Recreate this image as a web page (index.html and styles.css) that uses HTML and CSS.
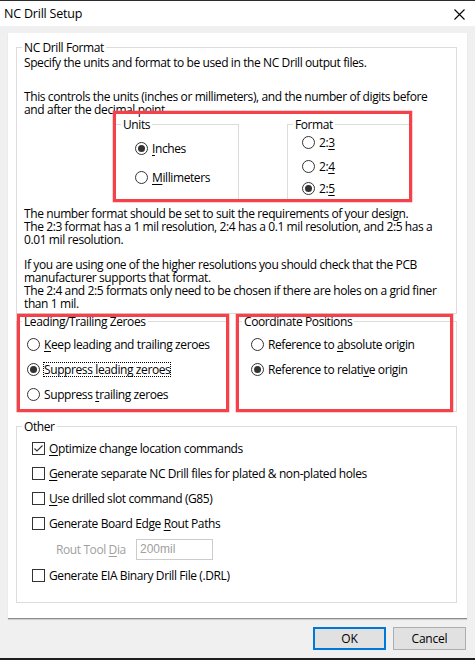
FILE: index.html
```html
<!DOCTYPE html>
<html lang="en">
<head>
<meta charset="utf-8">
<title>NC Drill Setup</title>
<link rel="stylesheet" href="styles.css">
</head>
<body>
<div class="window">
  <div class="titlebar">
    <span class="title">NC Drill Setup</span>
    <svg class="close" width="11" height="11" viewBox="0 0 11 11"><path d="M0.5 0.5 L10.5 10.5 M10.5 0.5 L0.5 10.5" stroke="#000" stroke-width="1.1" fill="none"/></svg>
  </div>
  <div class="client">
    <div class="panel">
      <fieldset class="group nc">
        <legend>NC Drill Format</legend>
        <p class="txt t1">Specify the units and format to be used in the NC Drill output files.</p>
        <p class="txt t2">This controls the units (inches or millimeters), and the number of digits before<br>and after the decimal point.</p>
        <div class="uf-row">
          <fieldset class="group units">
            <legend>Units</legend>
            <div class="opt u1"><span class="radio on"></span><span><u>I</u>nches</span></div>
            <div class="opt u2"><span class="radio"></span><span><u>M</u>illimeters</span></div>
          </fieldset>
          <fieldset class="group format">
            <legend>Format</legend>
            <div class="opt f1"><span class="radio"></span><span>2:<u>3</u></span></div>
            <div class="opt f2"><span class="radio"></span><span>2:<u>4</u></span></div>
            <div class="opt f3"><span class="radio on"></span><span>2:<u>5</u></span></div>
          </fieldset>
        </div>
        <p class="txt t3">The number format should be set to suit the requirements of your design.<br>The 2:3 format has a 1 mil resolution, 2:4 has a 0.1 mil resolution, and 2:5 has a<br>0.01 mil resolution.</p>
        <p class="txt t4">If you are using one of the higher resolutions you should check that the PCB<br>manufacturer supports that format.<br>The 2:4 and 2:5 formats only need to be chosen if there are holes on a grid finer<br>than 1 mil.</p>
      </fieldset>

      <div class="zero-row">
        <fieldset class="group lead">
          <legend>Leading/Trailing Zeroes</legend>
          <div class="opt r1"><span class="radio"></span><span><u>K</u>eep leading and trailing zeroes</span></div>
          <div class="opt r2"><span class="radio on"></span><span class="focus">Suppress <u>l</u>eading zeroes</span></div>
          <div class="opt r2"><span class="radio"></span><span>Suppress <u>t</u>railing zeroes</span></div>
        </fieldset>
        <fieldset class="group coord">
          <legend>Coordinate Positions</legend>
          <div class="opt r1"><span class="radio"></span><span>Reference to <u>a</u>bsolute origin</span></div>
          <div class="opt r2"><span class="radio on"></span><span>Reference to relati<u>v</u>e origin</span></div>
        </fieldset>
      </div>

      <fieldset class="group other">
        <legend>Other</legend>
        <div class="opt c1"><span class="check on"><svg width="11" height="11" viewBox="0 0 11 11"><path d="M1.5 5.5 L4 8 L9.5 2.5" stroke="#333" stroke-width="1.1" fill="none"/></svg></span><span><u>O</u>ptimize change location commands</span></div>
        <div class="opt c2"><span class="check"></span><span><u>G</u>enerate separate NC Drill files for plated &amp; non-plated holes</span></div>
        <div class="opt c2"><span class="check"></span><span><u>U</u>se drilled slot command (G85)</span></div>
        <div class="opt c2"><span class="check"></span><span>Generate Board Edge <u>R</u>out Paths</span></div>
        <div class="rout">
          <span class="rout-label">Rout Tool <u>D</u>ia</span>
          <span class="rout-input">200mil</span>
        </div>
        <div class="opt c3"><span class="check"></span><span>Generate EIA Binary Drill File (.DRL)</span></div>
      </fieldset>

      <div class="mark m-units"></div>
      <div class="mark m-lead"></div>
      <div class="mark m-coord"></div>
    </div>
    <div class="buttons">
      <button class="btn default">OK</button>
      <button class="btn">Cancel</button>
    </div>
  </div>
</div>
</body>
</html>
```

FILE: styles.css
```css
* { box-sizing: border-box; }

html, body {
  margin: 0;
  padding: 0;
}

body {
  width: 475px;
  height: 660px;
  overflow: hidden;
  background: #1e1e1e;
  font-family: "Open Sans", "Noto Sans", "DejaVu Sans", sans-serif;
  font-size: 12px;
  line-height: 13px;
  color: #000;
  letter-spacing: -0.4px;
}

.window {
  height: 658px;
  background: #f0f0f0;
  border-top: 1px solid #2b2b2b;
  display: flex;
  flex-direction: column;
}

.titlebar {
  height: 25px;
  background: #fff;
  display: flex;
  align-items: center;
  justify-content: space-between;
  padding: 0 10px 0 4px;
}

.title {
  font-size: 12.5px;
  letter-spacing: -0.2px;
}

.close {
  display: block;
  margin-top: 1px;
}

.client {
  flex: 1;
  padding: 7px 8px 0 8px;
  display: flex;
  flex-direction: column;
}

.panel {
  position: relative;
  height: 586px;
  background: #fff;
  border-bottom: 1px solid #8a8a8a;
  box-shadow: 0 1px 1px rgba(0, 0, 0, 0.12);
  padding: 8px 10px 0 8px;
}

.txt {
  margin: 0;
  white-space: nowrap;
}

u {
  text-decoration-thickness: 1px;
  text-underline-offset: 2px;
}

/* group boxes */
.group {
  margin: 0;
  padding: 0;
  border: 1px solid #dcdcdc;
  min-width: 0;
}

.group > legend {
  margin-left: 5px;
  padding: 0 2px;
  line-height: 13px;
  white-space: nowrap;
}

.nc { width: 441px; }
.nc > .txt { margin-left: 7px; }

.t1 { margin-top: 2px; }
.t2 { margin-top: 21px; }
.t3 { margin-top: 5px; }
.t4 { margin-top: 12px; margin-bottom: 3px; }

.uf-row {
  display: flex;
  gap: 48px;
  margin-top: 2px;
  margin-left: 98px;
  height: 84px;
}

.units, .format {
  width: 124px;
  height: 84px;
}

.units > .opt { padding-left: 19px; }
.format > .opt { padding-left: 14px; }

/* option rows */
.opt {
  display: flex;
  align-items: center;
  gap: 4px;
  height: 13px;
  white-space: nowrap;
}

.u1 { margin-top: 11px; }
.u2 { margin-top: 16px; }
.f1 { margin-top: 5px; }
.f2 { margin-top: 11px; }
.f3 { margin-top: 9px; }

.radio {
  flex: none;
  position: relative;
  width: 13px;
  height: 13px;
  border: 1px solid #333;
  border-radius: 50%;
  background: #fff;
}

.radio.on::after {
  content: "";
  position: absolute;
  left: 2px;
  top: 2px;
  width: 7px;
  height: 7px;
  border-radius: 50%;
  background: #333;
}

.check {
  flex: none;
  width: 13px;
  height: 13px;
  border: 1px solid #333;
  background: #fff;
  display: flex;
}

.check svg { display: block; }

.focus {
  outline: 1px dotted #000;
  outline-offset: 0;
}

.zero-row {
  display: flex;
  gap: 9px;
  margin-top: 1px;
}

.lead {
  width: 211px;
  height: 97px;
}

.coord {
  width: 221px;
  height: 97px;
}

.lead > .opt { padding-left: 10px; }
.coord > .opt { padding-left: 14px; }

.r1 { margin-top: 10px; }
.r2 { margin-top: 12px; }

.other {
  width: 441px;
  margin-top: 8px;
  padding-bottom: 20px;
}

.other > .opt { padding-left: 15px; }

.c1 { margin-top: 9px; }
.c2 { margin-top: 12px; }
.c3 { margin-top: 9px; }

.rout {
  display: flex;
  align-items: center;
  height: 21px;
  margin-top: 9px;
  padding-left: 39px;
}

.rout-label {
  width: 80px;
  color: #a0a0a0;
  white-space: nowrap;
}

.rout-input {
  width: 77px;
  height: 21px;
  border: 1px solid #cccccc;
  color: #a0a0a0;
  font-family: "Liberation Sans", Arial, sans-serif;
  font-size: 12px;
  letter-spacing: 0;
  line-height: 19px;
  padding-left: 3px;
}

/* red annotation frames drawn over the dialog */
.mark {
  position: absolute;
  border: 3px solid #f5414a;
  box-shadow: 0 0 0 0.5px rgba(245, 65, 74, 0.5);
  pointer-events: none;
}

.m-units { left: 105px; top: 78px; width: 299px; height: 91px; }
.m-lead { left: 9px; top: 281px; width: 212px; height: 98px; }
.m-coord { left: 228px; top: 281px; width: 217px; height: 98px; }

/* buttons */
.buttons {
  display: flex;
  justify-content: flex-end;
  gap: 7px;
  margin-top: 8px;
  padding-right: 1px;
}

.btn {
  width: 73px;
  height: 23px;
  font-family: inherit;
  font-size: 12px;
  color: #000;
  background: #e1e1e1;
  border: 1px solid #adadad;
  padding: 0;
  letter-spacing: -0.2px;
}

.btn.default {
  border: 2px solid #0078d7;
}
```
